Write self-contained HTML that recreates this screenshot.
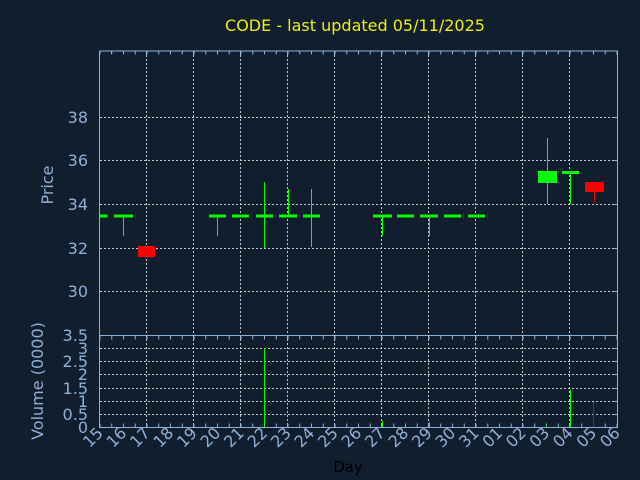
<!DOCTYPE html>
<html><head><meta charset="utf-8"><style>
html,body{margin:0;padding:0;background:#111e2e;}
svg{display:block;}
text{font-family:"DejaVu Sans","Liberation Sans",sans-serif;}
</style></head><body>
<svg width="640" height="480" viewBox="0 0 640 480" xmlns="http://www.w3.org/2000/svg">
<rect width="640" height="480" fill="#111e2e"/>
<text x="355" y="31" fill="#f0f000" font-size="16" text-anchor="middle">CODE - last updated 05/11/2025</text>
<g stroke="#c8c8c8" stroke-width="1" stroke-dasharray="2 2" fill="none">
<path d="M146.5 51V427M193.5 51V427M240.5 51V427M287.5 51V427M334.5 51V427M381.5 51V427M428.5 51V427M475.5 51V427M522.5 51V427M569.5 51V427"/>
<path d="M100 117.5H617M100 160.5H617M100 204.5H617M100 248.5H617M100 291.5H617"/>
<path d="M100 348.5H617M100 361.5H617M100 374.5H617M100 388.5H617M100 401.5H617M100 414.5H617"/>
</g>
<g stroke="#8fb0d8" stroke-width="1" fill="none">
<path d="M99.5 51V427.5H617.5V51H99.5M99.5 335.5H617.5"/>
<path d="M111.5 51v3" stroke-dasharray="3 0"/>
<line x1="99.5" y1="52.5" x2="617" y2="52.5" stroke-width="4" stroke-dasharray="1 10.75"/>
<line x1="99.5" y1="337.5" x2="617" y2="337.5" stroke-width="4" stroke-dasharray="1 10.75"/>
<line x1="99.5" y1="425.5" x2="617" y2="425.5" stroke-width="4" stroke-dasharray="1 10.75"/>
<path d="M146.5 51v4M193.5 51v4M240.5 51v4M287.5 51v4M334.5 51v4M381.5 51v4M428.5 51v4M475.5 51v4M522.5 51v4M569.5 51v4"/>
<path d="M146.5 335v4M193.5 335v4M240.5 335v4M287.5 335v4M334.5 335v4M381.5 335v4M428.5 335v4M475.5 335v4M522.5 335v4M569.5 335v4"/>
<path d="M146.5 427v-4M193.5 427v-4M240.5 427v-4M287.5 427v-4M334.5 427v-4M381.5 427v-4M428.5 427v-4M475.5 427v-4M522.5 427v-4M569.5 427v-4"/>
<path d="M613 117.5h4M613 160.5h4M613 204.5h4M613 248.5h4M613 291.5h4M613 348.5h4M613 361.5h4M613 374.5h4M613 388.5h4M613 401.5h4M613 414.5h4"/>
</g>
<!-- candles -->
<g stroke="#00ff00" stroke-width="1" fill="none">
<path d="M123.5 216V236M217.5 216V236M264.5 182V248M288.5 189V216M311.5 189V247M382.5 216V236M429.5 216V236M547.5 138V204M570.5 172V204"/>
</g>
<g fill="#00ff00">
<rect x="99.5" y="214.5" width="8" height="3"/>
<rect x="114" y="214.5" width="19" height="3"/>
<rect x="209" y="214.5" width="17" height="3"/>
<rect x="232" y="214.5" width="17" height="3"/>
<rect x="256" y="214.5" width="17" height="3"/>
<rect x="279" y="214.5" width="18" height="3"/>
<rect x="303" y="214.5" width="17" height="3"/>
<rect x="373" y="214.5" width="19" height="3"/>
<rect x="397" y="214.5" width="17" height="3"/>
<rect x="420" y="214.5" width="18" height="3"/>
<rect x="444" y="214.5" width="17" height="3"/>
<rect x="468" y="214.5" width="17" height="3"/>
<rect x="538" y="171" width="19" height="12"/>
<rect x="562" y="171" width="17" height="3"/>
</g>
<rect x="138" y="246" width="17" height="11" fill="#ff0000"/>
<rect x="585" y="182" width="19" height="10" fill="#ff0000"/>
<path d="M594.5 192V202" stroke="#ff0000" stroke-width="1"/>
<!-- volume -->
<g stroke="#00ff00" stroke-width="1">
<path d="M264.5 427V348M382.5 427V421M429.5 427V422M546.5 427V425M570.5 427V390M123.5 427V426"/>
</g>
<path d="M593.5 427V402" stroke="#e00000" stroke-width="1"/>
<!-- y labels -->
<g fill="#8fb0d8" font-size="16" text-anchor="end">
<text x="88" y="123">38</text>
<text x="88" y="166">36</text>
<text x="88" y="210">34</text>
<text x="88" y="254">32</text>
<text x="88" y="297">30</text>
<text x="88" y="341">3.5</text>
<text x="88" y="354">3</text>
<text x="88" y="367">2.5</text>
<text x="88" y="380">2</text>
<text x="88" y="394">1.5</text>
<text x="88" y="407">1</text>
<text x="88" y="420">0.5</text>
<text x="88" y="433">0</text>
</g>
<text transform="translate(53,185) rotate(-90)" fill="#8fb0d8" font-size="16" text-anchor="middle">Price</text>
<text transform="translate(43,381) rotate(-90)" fill="#8fb0d8" font-size="16" text-anchor="middle">Volume (0000)</text>
<text x="348" y="472" fill="#000000" font-size="15" text-anchor="middle">Day</text>
<g fill="#8fb0d8" font-size="16" text-anchor="end">
<text transform="translate(104,434) rotate(-45)">15</text>
<text transform="translate(127.5,434) rotate(-45)">16</text>
<text transform="translate(151,434) rotate(-45)">17</text>
<text transform="translate(174.5,434) rotate(-45)">18</text>
<text transform="translate(198,434) rotate(-45)">19</text>
<text transform="translate(221.5,434) rotate(-45)">20</text>
<text transform="translate(245,434) rotate(-45)">21</text>
<text transform="translate(268.5,434) rotate(-45)">22</text>
<text transform="translate(292,434) rotate(-45)">23</text>
<text transform="translate(315.5,434) rotate(-45)">24</text>
<text transform="translate(339,434) rotate(-45)">25</text>
<text transform="translate(362.5,434) rotate(-45)">26</text>
<text transform="translate(386,434) rotate(-45)">27</text>
<text transform="translate(409.5,434) rotate(-45)">28</text>
<text transform="translate(433,434) rotate(-45)">29</text>
<text transform="translate(456.5,434) rotate(-45)">30</text>
<text transform="translate(480,434) rotate(-45)">31</text>
<text transform="translate(503.5,434) rotate(-45)">01</text>
<text transform="translate(527,434) rotate(-45)">02</text>
<text transform="translate(550.5,434) rotate(-45)">03</text>
<text transform="translate(574,434) rotate(-45)">04</text>
<text transform="translate(597.5,434) rotate(-45)">05</text>
<text transform="translate(621,434) rotate(-45)">06</text>
</g>
</svg>
</body></html>
